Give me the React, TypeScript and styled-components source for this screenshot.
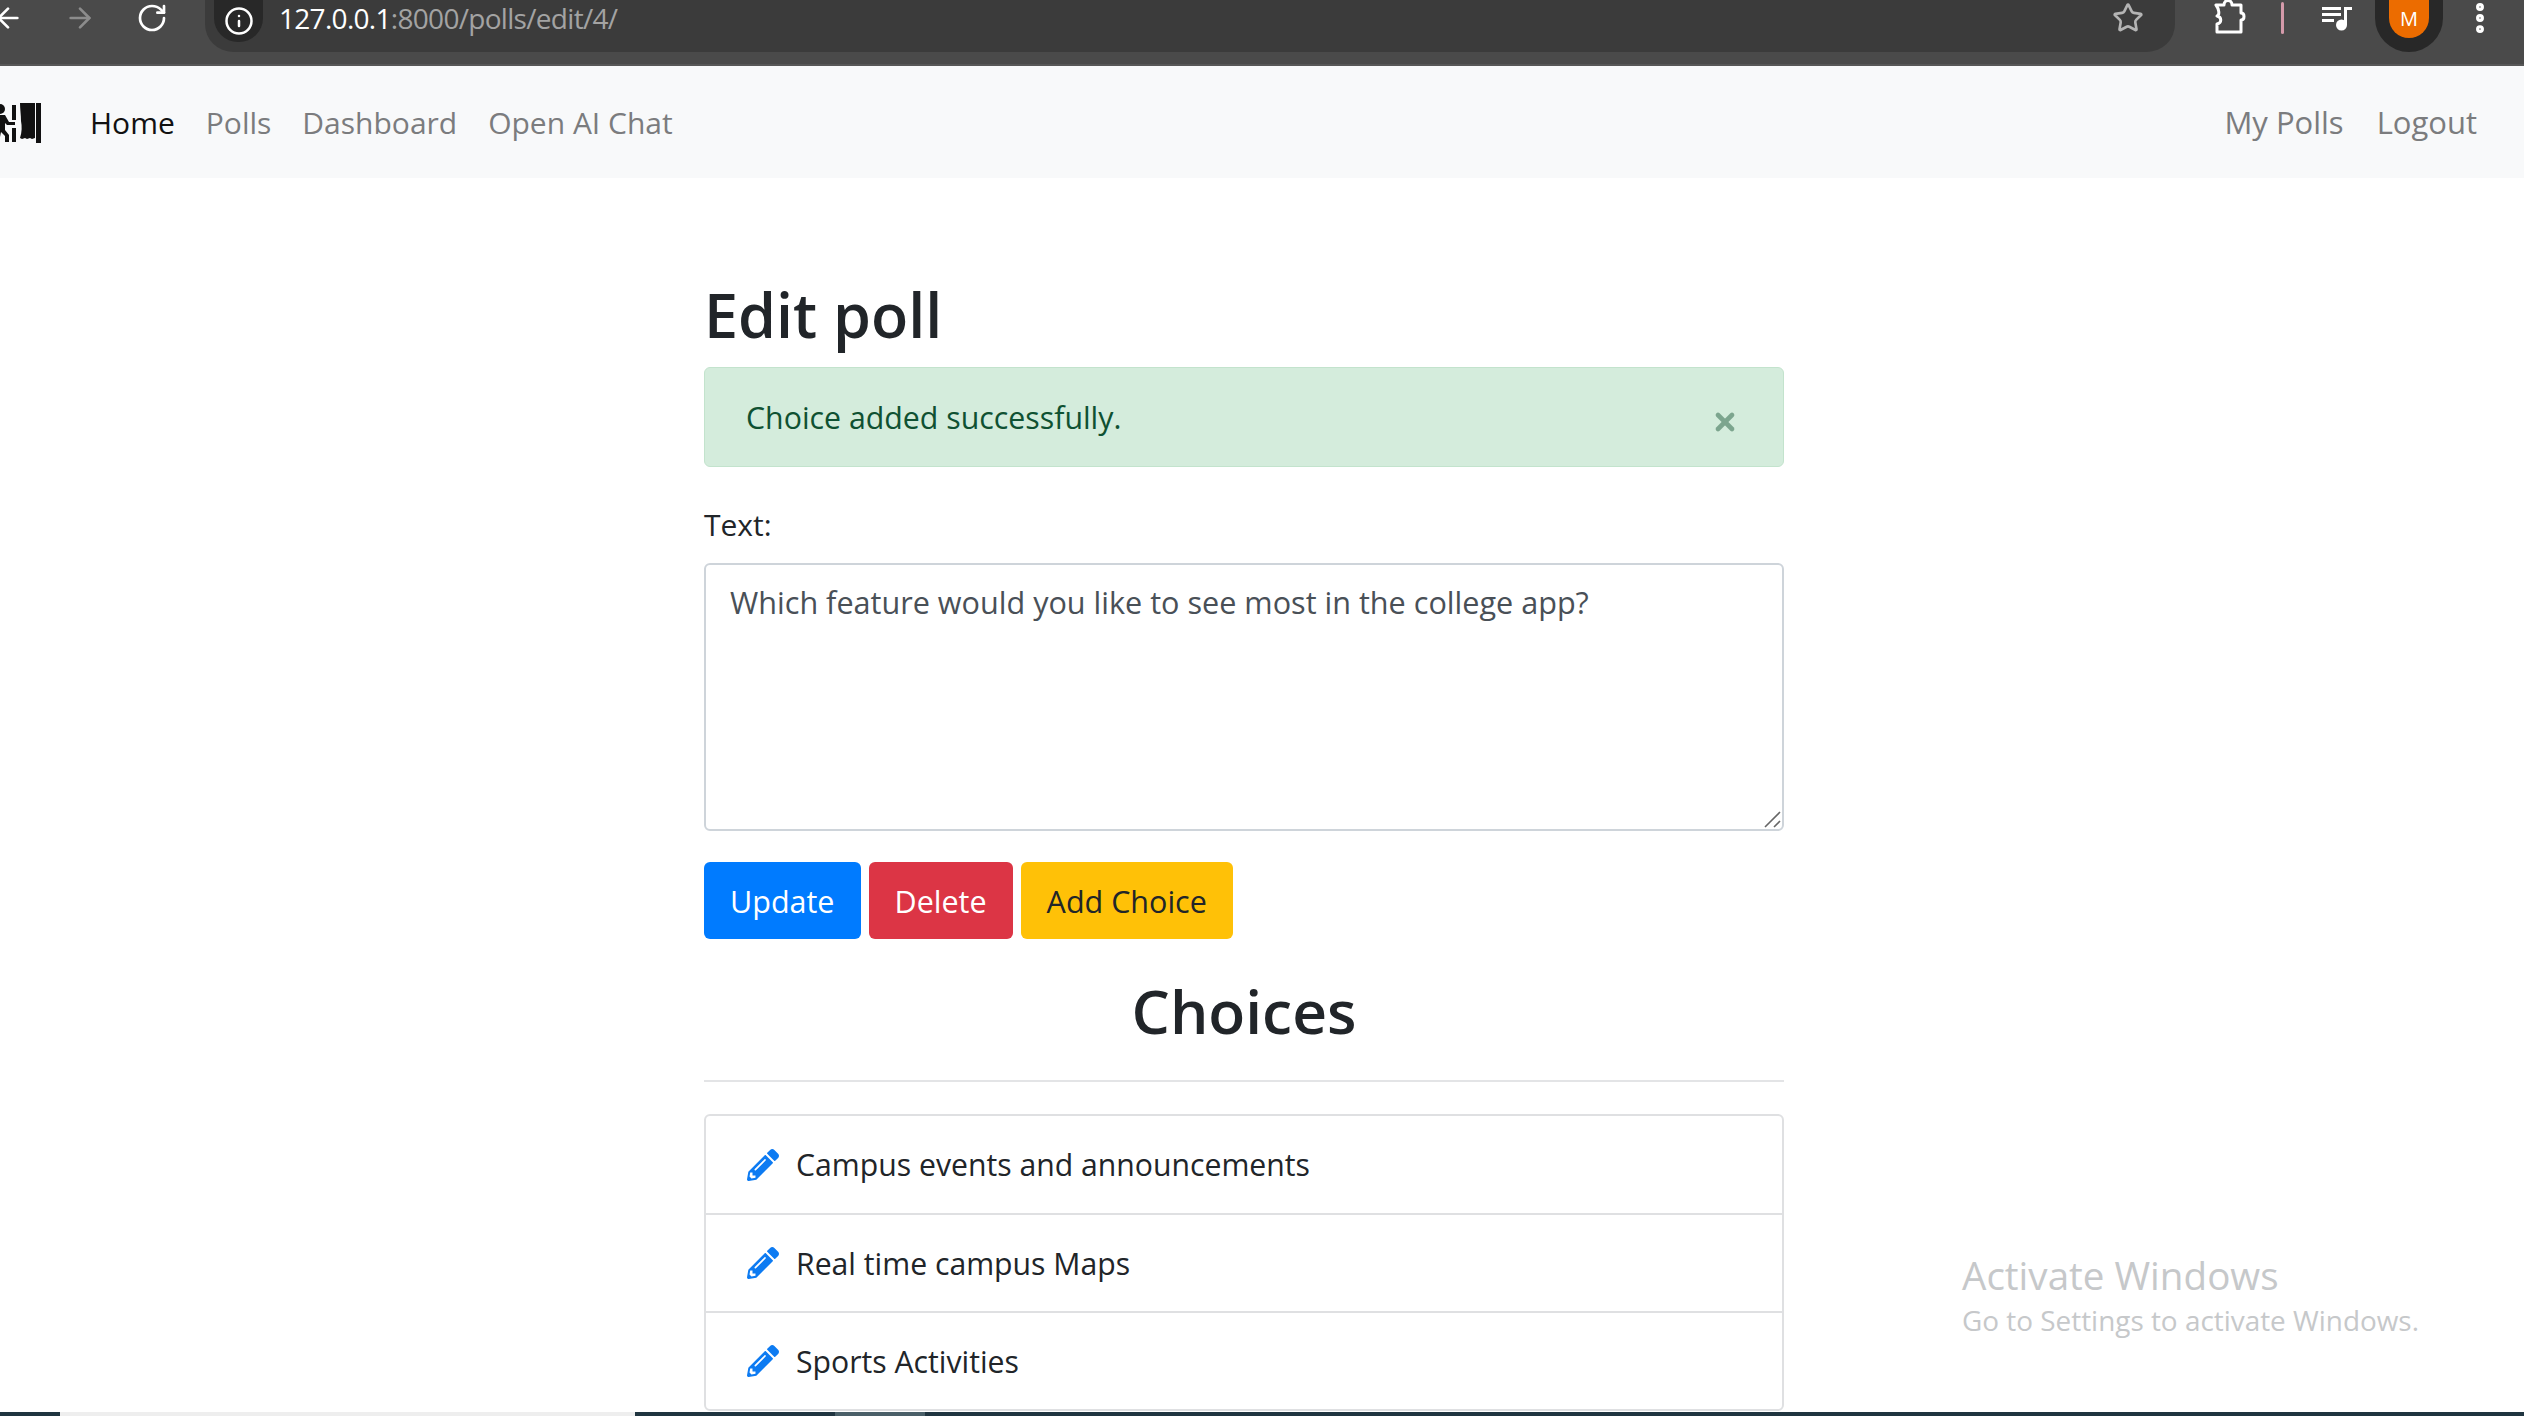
import React from "react";
import styled, { createGlobalStyle } from "styled-components";
import { ArrowLeft, ArrowRight, Info, MoreVertical, RotateCw, Star, X } from "lucide-react";
import { FaPencilAlt } from "react-icons/fa";

const GlobalStyle = createGlobalStyle`
  html, body {
    margin: 0;
    padding: 0;
    height: 100%;
    overflow: hidden;
    background: #fff;
    font-family: "Open Sans", "Liberation Sans", sans-serif;
    color: #212529;
  }
  * {
    box-sizing: border-box;
  }
`;

const Page = styled.div`
  position: relative;
  display: flex;
  flex-direction: column;
  height: 1416px;
  overflow: hidden;
`;

const BrowserBar = styled.div`
  flex: none;
  display: flex;
  align-items: flex-start;
  height: 66px;
  background: #4a4a4a;
  border-bottom: 2px solid #575757;
  color: #fff;
`;

const NavIcons = styled.div`
  flex: none;
  display: flex;
  align-items: center;
  gap: 40px;
  width: 213px;
  height: 36px;
  margin-left: -8px;
`;

const AddressBar = styled.div`
  flex: none;
  display: flex;
  align-items: flex-start;
  width: 1970px;
  height: 52px;
  padding-left: 9px;
  background: #3b3b3b;
  border-radius: 0 0 28px 28px;
`;

const InfoChip = styled.div`
  display: flex;
  align-items: center;
  justify-content: center;
  width: 49px;
  height: 42px;
  border-radius: 0 0 24px 24px;
  background: #282828;
`;

const Url = styled.div`
  margin-left: 16px;
  font-size: 28px;
  line-height: 36px;
  letter-spacing: -0.7px;
  color: #a3a3a3;

  b {
    font-weight: 400;
    color: #fff;
  }
`;

const AddressSpacer = styled.div`
  flex: 1;
`;

const StarSlot = styled.div`
  display: flex;
  align-items: center;
  height: 36px;
  margin-right: 31px;
`;

const ToolSlot = styled.div<{ $left: number }>`
  flex: none;
  display: flex;
  align-items: center;
  height: 36px;
  margin-left: ${(p) => p.$left}px;
`;

const PinkLine = styled.div`
  width: 3px;
  height: 32px;
  background: #d49aaa;
  border-radius: 2px;
`;

const AvatarRing = styled.div`
  flex: none;
  display: flex;
  align-items: flex-start;
  justify-content: center;
  width: 68px;
  height: 52px;
  margin-left: 23px;
  border-radius: 0 0 34px 34px;
  background: #282828;
`;

const Avatar = styled.div`
  display: flex;
  align-items: center;
  justify-content: center;
  width: 40px;
  height: 38px;
  padding-bottom: 2px;
  border-radius: 0 0 20px 20px;
  background: #ec6c00;
  font-size: 20px;
  color: #fff;
`;

const Navbar = styled.nav`
  flex: none;
  display: flex;
  align-items: center;
  justify-content: space-between;
  height: 112px;
  padding: 0 47px 0 0;
  background: #f8f9fa;
`;

const NavGroup = styled.div<{ $size: number; $gap: number }>`
  display: flex;
  align-items: center;
  gap: ${(p) => p.$gap}px;
  font-size: ${(p) => p.$size}px;
`;

const Brand = styled.div`
  display: flex;
  width: 59px;
`;

const NavLink = styled.a<{ $active?: boolean }>`
  color: ${(p) => (p.$active ? "#111" : "#7b7c7e")};
  text-decoration: none;
  white-space: nowrap;
`;

const Main = styled.main`
  flex: 1;
  width: 1080px;
  margin-left: 704px;
  min-height: 0;
`;

const Title = styled.h1`
  margin: 0;
  padding-top: 105px;
  height: 189px;
  font-size: 61px;
  line-height: 64px;
  font-weight: 600;
  color: #212529;
`;

const Alert = styled.div`
  display: flex;
  align-items: center;
  justify-content: space-between;
  height: 100px;
  padding: 1px 44px 0 41px;
  background: #d4ecdc;
  border: 1px solid #c3e3cd;
  border-radius: 6px;
  color: #0f5132;
  font-size: 30.3px;
`;

const CloseIcon = styled(X)`
  margin-top: 8px;
  color: #7ca58e;
`;

const FieldLabel = styled.label`
  display: block;
  margin-top: 40px;
  font-size: 30px;
  line-height: 36px;
`;

const TextBox = styled.div`
  position: relative;
  margin-top: 20px;
`;

const TextArea = styled.textarea`
  display: block;
  width: 100%;
  height: 268px;
  padding: 18px 24px;
  border: 2px solid #ced4da;
  border-radius: 6px;
  resize: none;
  outline: none;
  font-family: inherit;
  font-size: 30.6px;
  line-height: 38px;
  color: #495057;
`;

const Grip = styled.svg`
  position: absolute;
  right: 2px;
  bottom: 3px;
`;

const ButtonRow = styled.div`
  display: flex;
  gap: 8px;
  margin-top: 31px;
`;

const Button = styled.button<{ $bg: string; $fg: string }>`
  height: 77px;
  padding: 0 26px;
  border: none;
  border-radius: 6px;
  background: ${(p) => p.$bg};
  color: ${(p) => p.$fg};
  font-family: inherit;
  font-size: 30.5px;
`;

const Heading = styled.h2`
  margin: 43px 0 0;
  font-size: 60.5px;
  line-height: 58px;
  font-weight: 600;
  text-align: center;
  color: #212529;
`;

const Rule = styled.hr`
  margin: 40px 0 0;
  border: none;
  border-top: 2px solid #e3e4e6;
`;

const ChoiceList = styled.ul`
  margin: 32px 0 0;
  padding: 0;
  list-style: none;
  border: 2px solid #dfe0e2;
  border-radius: 6px;
`;

const ChoiceRow = styled.li`
  display: flex;
  align-items: center;
  gap: 17px;
  height: 98px;
  padding: 0 41px;
  font-size: 30.2px;
  color: #212529;

  &:first-child {
    height: 97px;
  }

  & + & {
    border-top: 2px solid #dfe0e2;
  }
`;

const PencilIcon = styled(FaPencilAlt)`
  flex: none;
  color: #0d7bf2;
`;

const Watermark = styled.div`
  position: absolute;
  left: 1962px;
  top: 1249px;
  color: #c6c8ca;
`;

const WatermarkTitle = styled.div`
  font-size: 38.6px;
  line-height: 52px;
`;

const WatermarkNote = styled.div`
  font-size: 27.9px;
  line-height: 38px;
`;

const Taskbar = styled.div`
  flex: none;
  display: flex;
  height: 4px;
  background: #203540;
`;

const TaskSegment = styled.div<{ $width: number; $bg: string }>`
  width: ${(p) => p.$width}px;
  background: ${(p) => p.$bg};
`;

const PuzzleIcon = () => (
  <svg width="32" height="36" viewBox="0 0 32 36" fill="none" stroke="#fff" strokeWidth="3" strokeLinejoin="round">
    <path d="M2 5h8c0-6 8-6 8 0h9v8c4 0 4 7 0 7v12H3v-8c5-1 5-7 0-8c3-1 2-7-1-11z" />
  </svg>
);

const MediaIcon = () => (
  <svg width="30" height="30" viewBox="0 0 30 30" fill="#fff">
    <rect x="0" y="4" width="19" height="3" />
    <rect x="0" y="10" width="19" height="3" />
    <rect x="0" y="16" width="12" height="3" />
    <rect x="22" y="4" width="3" height="18" />
    <rect x="22" y="4" width="8" height="3" />
    <circle cx="19.5" cy="22" r="5.5" />
  </svg>
);

const LogoIcon = () => (
  <svg width="42" height="44" viewBox="0 0 42 44" fill="#111">
    <circle cx="0" cy="9" r="5" />
    <path d="M-4 15h9l4 7h6v3H7l-2-2v7l4 5v7H5v-6l-4-4-2 10h-4z" />
    <rect x="12" y="5" width="4" height="15" />
    <rect x="12" y="28" width="4" height="14" />
    <path d="M20 3h15v35l-3 1-2-1-3 1-2-1-3 1-2-1c2-6 2-12 1-17c0-6-1-12-1-18z" />
    <rect x="36" y="3" width="5" height="40" />
  </svg>
);

const navItems = ["Home", "Polls", "Dashboard", "Open AI Chat"];
const choices = ["Campus events and announcements", "Real time campus Maps", "Sports Activities"];

const App: React.FC = () => {
  return (
    <Page>
      <GlobalStyle />
      <BrowserBar>
        <NavIcons>
          <ArrowLeft size={32} color="#fff" />
          <ArrowRight size={32} color="#8c8c8c" />
          <RotateCw size={32} color="#fff" />
        </NavIcons>
        <AddressBar>
          <InfoChip>
            <Info size={30} color="#fff" />
          </InfoChip>
          <Url>
            <b>127.0.0.1</b>:8000/polls/edit/4/
          </Url>
          <AddressSpacer />
          <StarSlot>
            <Star size={32} color="#b4b4b4" />
          </StarSlot>
        </AddressBar>
        <ToolSlot $left={39}>
          <PuzzleIcon />
        </ToolSlot>
        <ToolSlot $left={35}>
          <PinkLine />
        </ToolSlot>
        <ToolSlot $left={38}>
          <MediaIcon />
        </ToolSlot>
        <AvatarRing>
          <Avatar>M</Avatar>
        </AvatarRing>
        <ToolSlot $left={18}>
          <MoreVertical size={38} color="#fff" strokeWidth={3} />
        </ToolSlot>
      </BrowserBar>

      <Navbar>
        <NavGroup $size={30} $gap={31}>
          <Brand>
            <LogoIcon />
          </Brand>
          {navItems.map((item) => (
            <NavLink key={item} $active={item === "Home"}>
              {item}
            </NavLink>
          ))}
        </NavGroup>
        <NavGroup $size={31} $gap={33}>
          <NavLink>My Polls</NavLink>
          <NavLink>Logout</NavLink>
        </NavGroup>
      </Navbar>

      <Main>
        <Title>Edit poll</Title>
        <Alert>
          Choice added successfully.
          <CloseIcon size={28} strokeWidth={4} />
        </Alert>
        <FieldLabel>Text:</FieldLabel>
        <TextBox>
          <TextArea readOnly value="Which feature would you like to see most in the college app?" />
          <Grip width="18" height="18" viewBox="0 0 18 18" stroke="#666" strokeWidth="1.6">
            <path d="M1 17 16 2M10 17l6-6" />
          </Grip>
        </TextBox>
        <ButtonRow>
          <Button $bg="#007bff" $fg="#fff">Update</Button>
          <Button $bg="#dc3545" $fg="#fff">Delete</Button>
          <Button $bg="#ffc107" $fg="#212529">Add Choice</Button>
        </ButtonRow>
        <Heading>Choices</Heading>
        <Rule />
        <ChoiceList>
          {choices.map((choice) => (
            <ChoiceRow key={choice}>
              <PencilIcon size={32} />
              {choice}
            </ChoiceRow>
          ))}
        </ChoiceList>
      </Main>

      <Watermark>
        <WatermarkTitle>Activate Windows</WatermarkTitle>
        <WatermarkNote>Go to Settings to activate Windows.</WatermarkNote>
      </Watermark>

      <Taskbar>
        <TaskSegment $width={60} $bg="#203540" />
        <TaskSegment $width={575} $bg="#eeeeee" />
        <TaskSegment $width={200} $bg="#203540" />
        <TaskSegment $width={90} $bg="#4a5f68" />
      </Taskbar>
    </Page>
  );
};

export default App;
